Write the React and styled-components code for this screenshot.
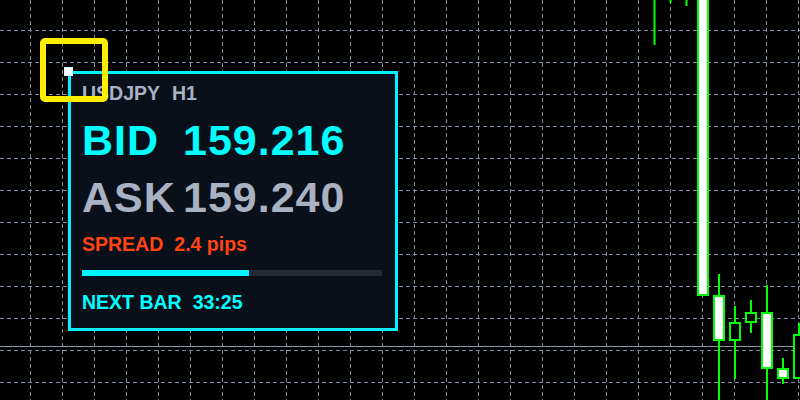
import React from "react";
import styled, { createGlobalStyle } from "styled-components";

const Global = createGlobalStyle`
  html, body { margin: 0; padding: 0; background: #000; }
  body { font-family: "Liberation Sans", Arial, sans-serif; }
`;

const Stage = styled.div`
  position: relative;
  width: 800px;
  height: 400px;
  background: #000;
  overflow: hidden;
`;

const ChartSvg = styled.svg`
  display: block;
  width: 800px;
  height: 400px;
`;

const Panel = styled.section`
  position: absolute;
  left: 68px;
  top: 71px;
  width: 330px;
  height: 260px;
  box-sizing: border-box;
  border: 3px solid #00f2ff;
  background: #0a101a;
  padding: 7px 13px 0 11px;
  display: flex;
  flex-direction: column;
  font-family: "Liberation Sans", Arial, sans-serif;
  font-weight: 700;
`;

const InfoRow = styled.div`
  display: flex;
  align-items: baseline;
  gap: ${(p) => p.$gap || 11}px;
  margin-top: ${(p) => p.$mt || 0}px;
  font-size: 19.5px;
  line-height: 24px;
  color: ${(p) => p.$color};
  white-space: nowrap;
`;

const QuoteRow = styled.div`
  display: grid;
  grid-template-columns: 101px auto;
  margin-top: ${(p) => p.$mt}px;
  font-size: 43px;
  line-height: 46px;
  letter-spacing: 1px;
  color: ${(p) => p.$color};
  white-space: nowrap;
`;

const Track = styled.div`
  margin-top: 14px;
  height: 6px;
  background: #232a36;
`;

const Fill = styled.div`
  height: 100%;
  background: #00f5ff;
`;

const Selection = styled.div`
  position: absolute;
  left: 40px;
  top: 38px;
  width: 68px;
  height: 64px;
  box-sizing: border-box;
  border: 6px solid #ffee00;
  border-radius: 5px;
`;

const Handle = styled.div`
  position: absolute;
  left: 64px;
  top: 67px;
  width: 9px;
  height: 9px;
  box-sizing: border-box;
  background: #ffffff;
  border: 1px solid #d8f6ff;
`;

const GRID = "#7d8ba0";
const GREEN = "#00ff00";

const candles = [
  { x: 697, top: -20, bottom: 296, bull: true },
  { x: 713, top: 295, bottom: 341, bull: true, wt: 274, wb: 400 },
  { x: 729, top: 322, bottom: 341, bull: false, wt: 306, wb: 379 },
  { x: 745, top: 312, bottom: 323, bull: false, wt: 300, wb: 333 },
  { x: 761, top: 312, bottom: 369, bull: true, wt: 285, wb: 400 },
  { x: 777, top: 368, bottom: 379, bull: true, wt: 358, wb: 384 },
  { x: 793, top: 334, bottom: 379, bull: false, wt: 323, wb: 379 },
];

const topWicks = [
  { x: 654, y2: 45 },
  { x: 670, y2: 3 },
  { x: 686, y2: 6 },
];

function Chart() {
  const v = [];
  for (let x = 30; x <= 800; x += 32) v.push(x);
  const h = [];
  for (let y = 30; y <= 400; y += 32) h.push(y);
  return (
    <ChartSvg viewBox="0 0 800 400">
      {h.map((y) => (
        <line key={"h" + y} x1="0" x2="800" y1={y + 0.5} y2={y + 0.5} stroke={GRID} strokeWidth="1" strokeDasharray="4 3" />
      ))}
      {v.map((x) => (
        <line key={"v" + x} y1="0" y2="400" x1={x + 0.5} x2={x + 0.5} stroke={GRID} strokeWidth="1" strokeDasharray="4 3" />
      ))}
      <line x1="0" x2="800" y1="346.5" y2="346.5" stroke="#8797aa" strokeWidth="1" />
      {topWicks.map((w) => (
        <line key={"t" + w.x} x1={w.x + 0.5} x2={w.x + 0.5} y1="0" y2={w.y2} stroke={GREEN} strokeWidth="2" />
      ))}
      {candles.map((c) => (
        <g key={c.x}>
          {c.wt !== undefined && (
            <line x1={c.x + 6} x2={c.x + 6} y1={c.wt} y2={c.wb} stroke={GREEN} strokeWidth="2" />
          )}
          <rect
            x={c.x + 1}
            y={c.top + 1}
            width={10}
            height={c.bottom - c.top - 2}
            fill={c.bull ? "#ffffff" : "#000000"}
            stroke={GREEN}
            strokeWidth="2"
          />
        </g>
      ))}
    </ChartSvg>
  );
}

export default function App() {
  const progress = 55.7;
  return (
    <Stage>
      <Global />
      <Chart />
      <Panel>
        <InfoRow $color="#a9b2c3" $gap={12}>
          <span>USDJPY</span>
          <span>H1</span>
        </InfoRow>
        <QuoteRow $mt={12} $color="#00ffff">
          <span>BID</span>
          <span>159.216</span>
        </QuoteRow>
        <QuoteRow $mt={11} $color="#a9b2c3">
          <span>ASK</span>
          <span>159.240</span>
        </QuoteRow>
        <InfoRow $mt={12} $color="#ff4411" $gap={11}>
          <span>SPREAD</span>
          <span>2.4 pips</span>
        </InfoRow>
        <Track>
          <Fill style={{ width: `${progress}%` }} />
        </Track>
        <InfoRow $mt={14} $color="#00ffff" $gap={11}>
          <span>NEXT BAR</span>
          <span>33:25</span>
        </InfoRow>
      </Panel>
      <Selection />
      <Handle />
    </Stage>
  );
}
